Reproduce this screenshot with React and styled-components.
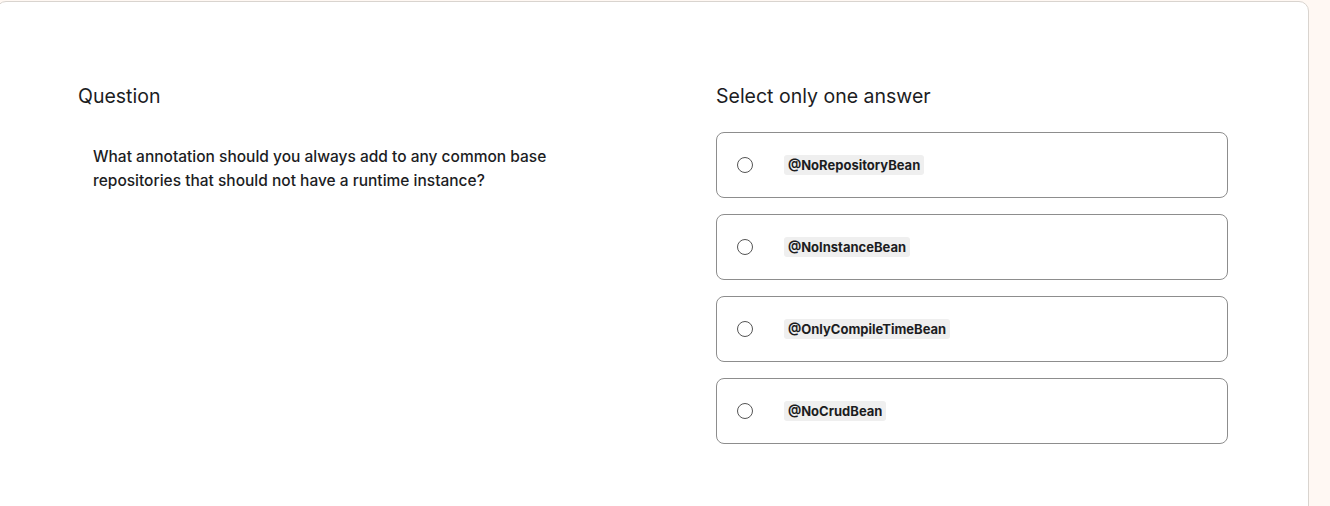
import React, { useState } from "react";
import styled, { createGlobalStyle } from "styled-components";

const options = [
    "@NoRepositoryBean",
    "@NoInstanceBean",
    "@OnlyCompileTimeBean",
    "@NoCrudBean"
];

function App() {
    const [picked, setPicked] = useState(null);

    return (
        <>
            <GlobalStyle />
            <Page>
                <Card>
                    <Column>
                        <Heading>Question</Heading>
                        <Prompt>
                            What annotation should you always add to any common base
                            repositories that should not have a runtime instance?
                        </Prompt>
                    </Column>
                    <Column>
                        <Heading>Select only one answer</Heading>
                        <Answers>
                            {options.map((opt, i) => (
                                <Answer key={opt} onClick={() => setPicked(i)}>
                                    <Radio checked={picked === i} />
                                    <Code>{opt}</Code>
                                </Answer>
                            ))}
                        </Answers>
                    </Column>
                </Card>
            </Page>
        </>
    );
}

export default App;

const GlobalStyle = createGlobalStyle`
    html, body {
        margin: 0;
        background: #fff8f3;
    }
    body {
        font-family: Inter, "Noto Sans", sans-serif;
        color: #1c1d1f;
    }
`;

const Page = styled.div`
    width: 1330px;
    height: 506px;
    overflow: hidden;
    padding-top: 1px;
    box-sizing: border-box;
`;

// the card runs a little past the left edge of the viewport
const Card = styled.div`
    width: 1313px;
    margin-left: -4px;
    min-height: 560px;
    box-sizing: border-box;
    background: #fff;
    border: 1px solid #d9d4cf;
    border-radius: 10px;
    padding: 80px 80px 0 81px;
    display: grid;
    grid-template-columns: 1fr 512px;
    align-items: start;
`;

const Column = styled.div`
    display: flex;
    flex-direction: column;
`;

const Heading = styled.h2`
    margin: 0;
    font-size: 19.5px;
    font-weight: 400;
    line-height: 28px;
`;

const Prompt = styled.p`
    margin: 35px 0 0 15px;
    max-width: 480px;
    font-size: 15.5px;
    font-weight: 500;
    line-height: 24px;
`;

const Answers = styled.div`
    margin-top: 22px;
    display: flex;
    flex-direction: column;
    gap: 16px;
`;

const Answer = styled.label`
    height: 66px;
    box-sizing: border-box;
    border: 1px solid #8d8d8d;
    border-radius: 8px;
    display: flex;
    align-items: center;
    padding-left: 20px;
    cursor: pointer;
`;

const Radio = styled.span`
    width: 16px;
    height: 16px;
    box-sizing: border-box;
    border-radius: 50%;
    border: 1px solid #555;
    background: ${p => (p.checked ? "radial-gradient(#1c1d1f 40%, #fff 45%)" : "#fff")};
    flex-shrink: 0;
`;

const Code = styled.span`
    margin-left: 31px;
    padding: 2px 4px;
    background: #efefef;
    border-radius: 3px;
    font-size: 13px;
    font-weight: 700;
    line-height: 16px;
`;
